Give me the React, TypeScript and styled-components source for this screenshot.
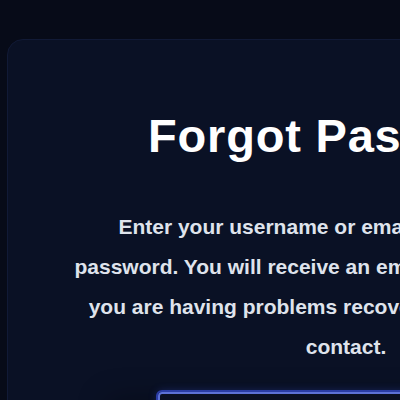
import React from "react";
import styled, { createGlobalStyle } from "styled-components";

const Global = createGlobalStyle`
  html, body {
    margin: 0;
    padding: 0;
    background: #070b18;
    overflow: hidden;
  }
  body {
    font-family: "Liberation Sans", Arial, sans-serif;
  }
`;

const Page = styled.div`
  padding: 39px 0 0 7px;
  width: 900px;
`;

const Card = styled.section`
  width: 678px;
  min-height: 500px;
  box-sizing: border-box;
  background: #0a1125;
  border: 1px solid #111a36;
  border-radius: 16px;
  padding: 68px 20px 40px;
  display: flex;
  flex-direction: column;
  align-items: center;
`;

const Title = styled.h1`
  margin: 0;
  font-size: 47px;
  line-height: 56px;
  font-weight: 700;
  color: #ffffff;
  letter-spacing: 0.8px;
  white-space: nowrap;
`;

const Intro = styled.p`
  margin: 43px 0 0;
  font-size: 21px;
  line-height: 40px;
  font-weight: 700;
  color: #dfe3ec;
  text-align: center;
  white-space: nowrap;
`;

const Field = styled.input`
  margin-top: 25px;
  width: 376px;
  height: 48px;
  box-sizing: border-box;
  background: #0a0f22;
  border: 2px solid #5d71d6;
  border-radius: 4px;
  outline: 2px solid #2a3ca6;
  box-shadow: 0 0 10px rgba(50, 80, 220, 0.45), -50px 8px 30px rgba(0, 0, 0, 0.35);
  color: #e3e6ee;
  font-family: inherit;
  font-size: 18px;
  padding: 0 14px;
`;

export default function App() {
  return (
    <>
      <Global />
      <Page>
        <Card>
          <Title>Forgot Password</Title>
          <Intro>
            Enter your username or email to recover your
            <br />
            password. You will receive an email with a reset link. If
            <br />
            you are having problems recovering access, please
            <br />
            contact.
          </Intro>
          <Field type="text" aria-label="Username or email" />
        </Card>
      </Page>
    </>
  );
}
